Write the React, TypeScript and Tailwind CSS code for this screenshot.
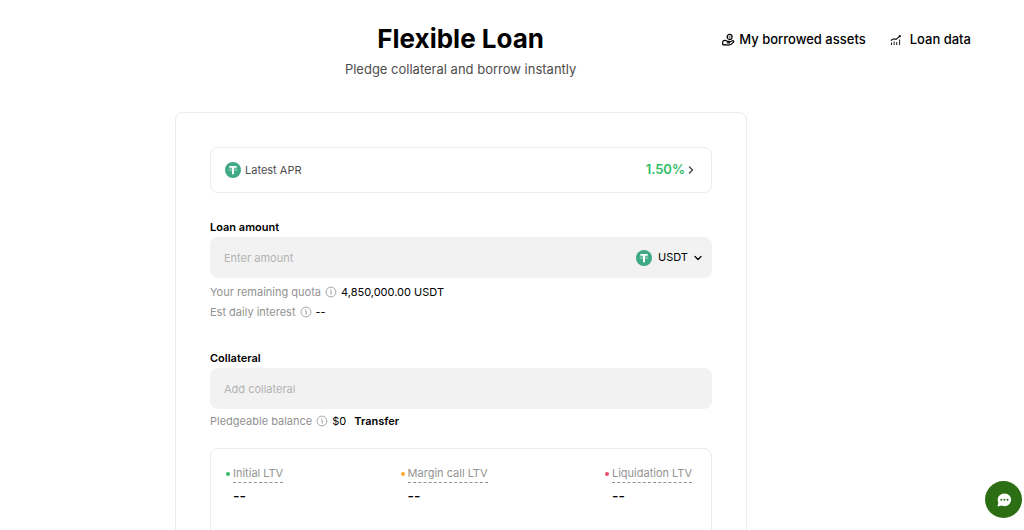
import React, { useState } from 'react';
import { ChevronDown, ChevronRight } from 'lucide-react';

const TetherIcon = () => (
  <svg viewBox="0 0 16 16" className="size-4 shrink-0" aria-hidden="true">
    <circle cx="8" cy="8" r="8" fill="#3fa986" />
    <path d="M4.3 4h7.4v1.7H9v6.5H7V5.7H4.3z" fill="#fff" />
    <ellipse cx="8" cy="7.7" rx="4.3" ry="0.9" fill="none" stroke="#fff" strokeWidth="0.4" />
  </svg>
);

const InfoIcon = () => (
  <svg viewBox="0 0 12 12" className="size-3 shrink-0 text-[#929292]" fill="none" stroke="currentColor" aria-hidden="true">
    <circle cx="6" cy="6" r="4.9" strokeWidth="0.8" />
    <path d="M5.3 5.2H6.2V8.6M5.8 3.2V4.2" strokeWidth="0.9" />
  </svg>
);

const BorrowIcon = () => (
  <svg viewBox="0 0 14 14" className="size-3.5 shrink-0" fill="none" stroke="currentColor" strokeWidth="1.2" strokeLinejoin="round" aria-hidden="true">
    <circle cx="8.6" cy="3.9" r="2.5" />
    <path d="M8.6 3.1L9.4 3.9L8.6 4.7L7.8 3.9Z" strokeWidth="0.6" />
    <path d="M1.7 8.2V12" />
    <path d="M1.7 8.2C3.5 7 5 7.2 6.2 8.4H8.4V9.9H5.8M8.4 9.2L11.4 7.8C12.8 7.4 13.2 8.6 12.4 9.4C10.6 11.4 8.8 12.3 6.8 12.2L3.8 11.6L1.7 12" />
  </svg>
);

const ChartIcon = () => (
  <svg viewBox="0 0 12 12" className="size-3 shrink-0" fill="none" stroke="currentColor" aria-hidden="true">
    <path d="M1.5 8.5V11M4.1 7.5V11M6.7 8V11M9.6 5.5V11" strokeWidth="0.9" />
    <path d="M0.8 6.5L3.8 4.8L6 5.4L9.6 2.3" strokeWidth="1.1" />
    <circle cx="9.8" cy="2.2" r="1.1" fill="currentColor" stroke="none" />
  </svg>
);

const levels = [
  { label: 'Initial LTV', dot: 'bg-[#31bd65]' },
  { label: 'Margin call LTV', dot: 'bg-[#ffa928]' },
  { label: 'Liquidation LTV', dot: 'bg-[#eb4b6d]' },
];

const App = () => {
  const [amount, setAmount] = useState('');
  const [collateral, setCollateral] = useState('');

  return (
    <div className="min-h-screen bg-white font-['Inter','Liberation_Sans',sans-serif] text-[11px] text-black">
      {/* Header */}
      <header className="flex items-start pt-5 pr-[53px] pl-[200px]">
        <div className="flex-1 text-center">
          <h1 className="text-[26px] leading-[38px] font-bold">Flexible Loan</h1>
          <p className="text-[13px] leading-[22px] text-[#4d4d4d]">Pledge collateral and borrow instantly</p>
        </div>
        <nav className="flex h-10 shrink-0 items-center gap-6 text-[13px] font-medium">
          <a href="#borrowed" className="flex items-center gap-1">
            <BorrowIcon />
            My borrowed assets
          </a>
          <a href="#data" className="flex items-center gap-2">
            <ChartIcon />
            Loan data
          </a>
        </nav>
      </header>

      {/* Loan form */}
      <main className="mt-8 pr-[102px]">
        <form className="mx-auto max-w-[572px] rounded-lg border border-[#ebebeb] p-[34px]">
          <a href="#apr" className="flex h-[46px] items-center justify-between rounded-lg border border-[#ebebeb] px-3.5">
            <span className="flex items-center gap-1 text-[#4d4d4d]">
              <TetherIcon />
              Latest APR
            </span>
            <span className="flex items-center text-[13px] font-semibold text-[#31bd65]">
              1.50%
              <ChevronRight strokeWidth={3} className="size-3 text-[#4d4d4d]" />
            </span>
          </a>

          <label htmlFor="amount" className="mt-6 block leading-5 font-semibold">Loan amount</label>
          <div className="flex h-[41px] items-center rounded-lg bg-[#f2f2f2] pr-2 pl-3.5">
            <input
              id="amount"
              value={amount}
              onChange={(e) => setAmount(e.target.value)}
              placeholder="Enter amount"
              className="h-5 min-w-0 flex-1 outline-none placeholder:text-[#b3b3b3]"
            />
            <TetherIcon />
            <div className="relative ml-1.5 flex items-center">
              <select aria-label="Loan currency" className="h-5 appearance-none pr-4 outline-none">
                <option>USDT</option>
              </select>
              <ChevronDown strokeWidth={2.5} className="pointer-events-none absolute right-0 size-3" />
            </div>
          </div>

          <div className="mt-1 flex h-5 items-center gap-1">
            <span className="text-[#929292]">Your remaining quota</span>
            <InfoIcon />
            <span>4,850,000.00 USDT</span>
          </div>
          <div className="flex h-5 items-center gap-1">
            <span className="text-[#929292]">Est daily interest</span>
            <InfoIcon />
            <span>--</span>
          </div>

          <label htmlFor="collateral" className="mt-[26px] block leading-5 font-semibold">Collateral</label>
          <div className="flex h-[41px] items-center rounded-lg bg-[#f2f2f2] px-3.5">
            <input
              id="collateral"
              value={collateral}
              onChange={(e) => setCollateral(e.target.value)}
              placeholder="Add collateral"
              className="h-5 min-w-0 flex-1 outline-none placeholder:text-[#b3b3b3]"
            />
          </div>
          <div className="mt-0.5 flex h-5 items-center gap-1">
            <span className="text-[#929292]">Pledgeable balance</span>
            <InfoIcon />
            <span>$0</span>
            <a href="#transfer" className="ml-1 font-semibold">Transfer</a>
          </div>

          {/* LTV levels */}
          <div className="mt-[17px] flex justify-between rounded-lg border border-[#ebebeb] px-[15px] pt-4 pb-10">
            {levels.map((level) => (
              <div key={level.label} className="flex gap-[3px] pr-1">
                <span className={`mt-[7px] size-1 shrink-0 rounded-full ${level.dot}`}></span>
                <div>
                  <p className="border-b border-dashed border-[#929292] leading-[17px] text-[#929292]">{level.label}</p>
                  <p className="mt-1 text-sm leading-[18px] font-medium">--</p>
                </div>
              </div>
            ))}
          </div>
        </form>
      </main>

      {/* Support chat */}
      <button type="button" aria-label="Chat" className="fixed right-0.5 bottom-3 flex size-[37px] items-center justify-center rounded-full bg-[#2c6e14]">
        <svg viewBox="0 0 16 16" className="size-4" aria-hidden="true">
          <path d="M8.5 1.5A6.7 6.3 0 1 1 5.8 13.6L1.5 14.5L2.3 10.5A6.7 6.3 0 0 1 8.5 1.5Z" fill="#fff" />
          <circle cx="5.3" cy="7.8" r="1" fill="#2c6e14" />
          <circle cx="8.4" cy="7.8" r="1" fill="#2c6e14" />
          <circle cx="11.5" cy="7.8" r="1" fill="#2c6e14" />
        </svg>
      </button>
    </div>
  );
};

export default App;
